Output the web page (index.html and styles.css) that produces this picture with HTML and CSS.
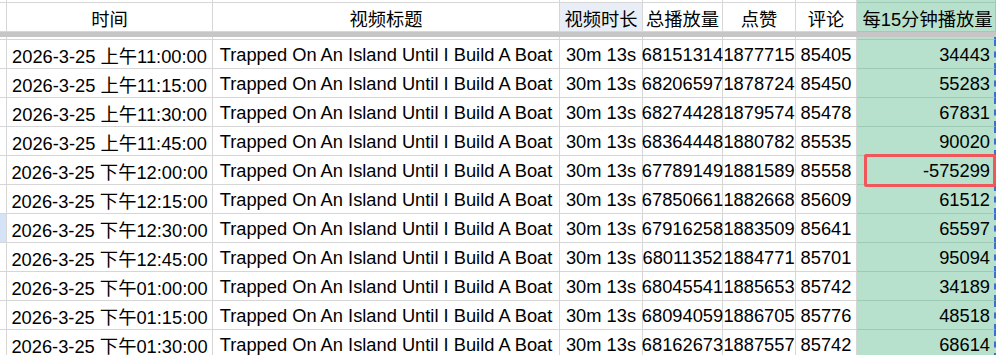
FILE: index.html
```html
<!DOCTYPE html>
<html lang="zh">
<head>
<meta charset="utf-8">
<title>Sheet</title>
<link rel="stylesheet" href="styles.css">
</head>
<body>
<div class="sheet">
  <div class="grid">
    <!-- top stub row -->
    <div class="c rh"></div><div class="c"></div><div class="c"></div><div class="c"></div><div class="c"></div><div class="c"></div><div class="c"></div><div class="c g"></div>
    <!-- header row -->
    <div class="c rh"></div>
    <div class="c ctr">时间</div>
    <div class="c ctr">视频标题</div>
    <div class="c ctr sel">视频时长</div>
    <div class="c ctr">总播放量</div>
    <div class="c ctr">点赞</div>
    <div class="c ctr">评论</div>
    <div class="c g hl">每15分钟播放量</div>
    <!-- freeze band -->
    <div class="band"></div>
    <!-- spacer row -->
    <div class="c rh"></div><div class="c"></div><div class="c"></div><div class="c"></div><div class="c"></div><div class="c"></div><div class="c"></div><div class="c g dash"></div>

    <div class="c rh"></div><div class="c ctr">2026-3-25 上午11:00:00</div><div class="c ctr">Trapped On An Island Until I Build A Boat</div><div class="c ctr">30m 13s</div><div class="c ctr">68151314</div><div class="c ctr">1877715</div><div class="c ctr">85405</div><div class="c g dash num">34443</div>
    <div class="c rh"></div><div class="c ctr">2026-3-25 上午11:15:00</div><div class="c ctr">Trapped On An Island Until I Build A Boat</div><div class="c ctr">30m 13s</div><div class="c ctr">68206597</div><div class="c ctr">1878724</div><div class="c ctr">85450</div><div class="c g dash num">55283</div>
    <div class="c rh"></div><div class="c ctr">2026-3-25 上午11:30:00</div><div class="c ctr">Trapped On An Island Until I Build A Boat</div><div class="c ctr">30m 13s</div><div class="c ctr">68274428</div><div class="c ctr">1879574</div><div class="c ctr">85478</div><div class="c g dash num">67831</div>
    <div class="c rh"></div><div class="c ctr">2026-3-25 上午11:45:00</div><div class="c ctr">Trapped On An Island Until I Build A Boat</div><div class="c ctr">30m 13s</div><div class="c ctr">68364448</div><div class="c ctr">1880782</div><div class="c ctr">85535</div><div class="c g dash num">90020</div>
    <div class="c rh"></div><div class="c ctr">2026-3-25 下午12:00:00</div><div class="c ctr">Trapped On An Island Until I Build A Boat</div><div class="c ctr">30m 13s</div><div class="c ctr">67789149</div><div class="c ctr">1881589</div><div class="c ctr">85558</div><div class="c g dash num marked">-575299<span class="redbox"></span></div>
    <div class="c rh"></div><div class="c ctr">2026-3-25 下午12:15:00</div><div class="c ctr">Trapped On An Island Until I Build A Boat</div><div class="c ctr">30m 13s</div><div class="c ctr">67850661</div><div class="c ctr">1882668</div><div class="c ctr">85609</div><div class="c g dash num">61512</div>
    <div class="c rh rsel"></div><div class="c ctr">2026-3-25 下午12:30:00</div><div class="c ctr">Trapped On An Island Until I Build A Boat</div><div class="c ctr">30m 13s</div><div class="c ctr">67916258</div><div class="c ctr">1883509</div><div class="c ctr">85641</div><div class="c g dash num">65597</div>
    <div class="c rh"></div><div class="c ctr">2026-3-25 下午12:45:00</div><div class="c ctr">Trapped On An Island Until I Build A Boat</div><div class="c ctr">30m 13s</div><div class="c ctr">68011352</div><div class="c ctr">1884771</div><div class="c ctr">85701</div><div class="c g dash num">95094</div>
    <div class="c rh"></div><div class="c ctr">2026-3-25 下午01:00:00</div><div class="c ctr">Trapped On An Island Until I Build A Boat</div><div class="c ctr">30m 13s</div><div class="c ctr">68045541</div><div class="c ctr">1885653</div><div class="c ctr">85742</div><div class="c g dash num">34189</div>
    <div class="c rh"></div><div class="c ctr">2026-3-25 下午01:15:00</div><div class="c ctr">Trapped On An Island Until I Build A Boat</div><div class="c ctr">30m 13s</div><div class="c ctr">68094059</div><div class="c ctr">1886705</div><div class="c ctr">85776</div><div class="c g dash num">48518</div>
    <div class="c rh"></div><div class="c ctr">2026-3-25 下午01:30:00</div><div class="c ctr">Trapped On An Island Until I Build A Boat</div><div class="c ctr">30m 13s</div><div class="c ctr">68162673</div><div class="c ctr">1887557</div><div class="c ctr">85742</div><div class="c g dash num">68614</div>
  </div>
</div>
</body>
</html>
```

FILE: styles.css
```css
html, body {
  margin: 0;
  padding: 0;
  background: #ffffff;
}
.sheet {
  width: 996px;
  height: 355px;
  overflow: hidden;
  font-family: "Liberation Sans", Arial, "Noto Sans CJK SC", sans-serif;
  font-size: 18.3px;
  color: #000;
}
.grid {
  display: grid;
  grid-template-columns: 7px 206px 347px 83px 80px 73px 61px 139px;
  grid-template-rows: 3px 29px 5px 3px repeat(11, 29px);
}
.c {
  box-sizing: border-box;
  border-right: 1px solid #d6d6d6;
  border-bottom: 1px solid #d6d6d6;
  display: flex;
  align-items: center;
  white-space: nowrap;
  min-width: 0;
  padding-top: 1px;
  background: #ffffff;
}
.ctr {
  justify-content: center;
}
.rh {
  background: #ffffff;
}
.rsel {
  background: #d5e3f6;
}
.sel {
  background: #e9eef6;
}
.g {
  background: #b7e1cd;
  border-bottom-color: #9dcbb5;
  border-right-color: #9dcbb5;
}
.hl {
  justify-content: center;
  padding-left: 3px;
}
.num {
  justify-content: flex-end;
  padding-right: 4px;
}
.dash {
  border-right: 2px dashed #3d6fd0;
}
.band {
  grid-column: 1 / -1;
  background: #c6c6c6;
}
.marked {
  position: relative;
}
.redbox {
  position: absolute;
  left: 7px;
  top: -2px;
  width: 132px;
  height: 33px;
  box-sizing: border-box;
  border: 3px solid #f0575a;
  border-radius: 2px;
}
```
